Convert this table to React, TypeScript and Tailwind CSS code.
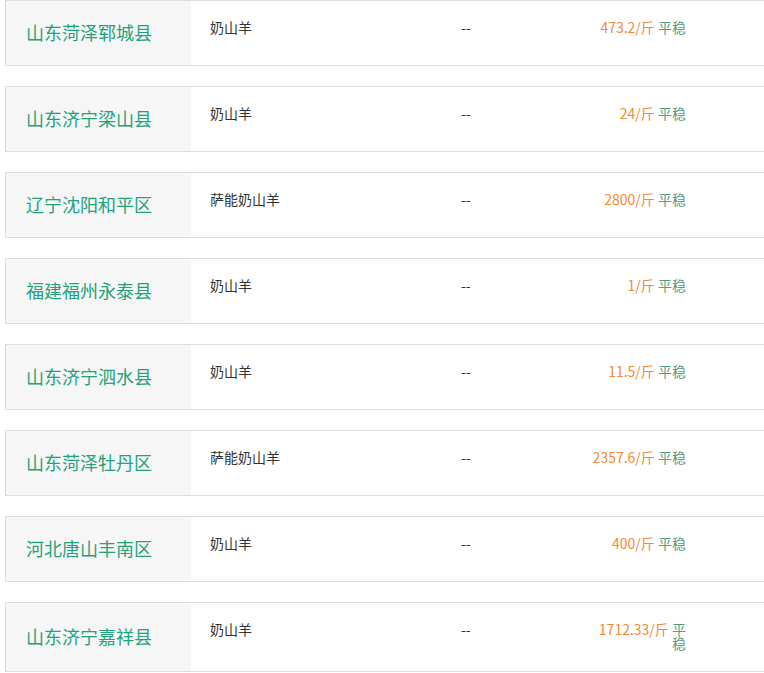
import React from 'react';

const rows = [
  { area: '山东菏泽郓城县', breed: '奶山羊', price: '473.2' },
  { area: '山东济宁梁山县', breed: '奶山羊', price: '24' },
  { area: '辽宁沈阳和平区', breed: '萨能奶山羊', price: '2800' },
  { area: '福建福州永泰县', breed: '奶山羊', price: '1' },
  { area: '山东济宁泗水县', breed: '奶山羊', price: '11.5' },
  { area: '山东菏泽牡丹区', breed: '萨能奶山羊', price: '2357.6' },
  { area: '河北唐山丰南区', breed: '奶山羊', price: '400' },
  { area: '山东济宁嘉祥县', breed: '奶山羊', price: '1712.33' },
];

const App = () => {
  return (
    <div className="w-full overflow-hidden bg-white">
      <ul
        className="w-[800px] ml-[5px] flex flex-col gap-5 text-[#333]"
        style={{ fontFamily: '"Noto Sans CJK SC", "Noto Sans", sans-serif' }}
      >
        {rows.map((row) => (
          <li key={row.area} className="flex border border-[#dedede] min-h-[66px]">
            {/* area */}
            <div className="w-[185px] shrink-0 bg-[#f6f6f6] flex items-center pl-5 pb-[2px] text-[18px] text-[#22a37c]">
              {row.area}
            </div>
            <div className="w-[270px] shrink-0 pl-[19px] pt-[19px] pb-[21px] text-[14px] leading-[14px]">{row.breed}</div>
            <div className="w-[125px] shrink-0 pt-[19px] pb-[21px] text-[14px] leading-[14px]">--</div>
            {/* price + trend */}
            <div className="w-[100px] shrink-0 pt-[19px] pb-[21px] text-[14px] leading-[14px] text-right">
              <span className="text-[#f08a36]">{row.price}/斤</span>{' '}
              <span className="text-[#579c80]">平稳</span>
            </div>
            <div className="flex-1" />
          </li>
        ))}
      </ul>
    </div>
  );
};

export default App;
